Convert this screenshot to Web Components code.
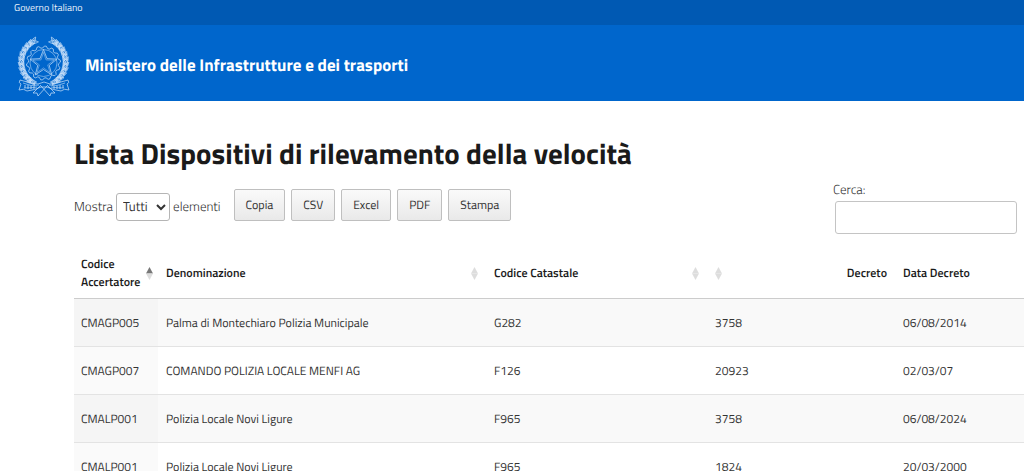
<!DOCTYPE html>
<html lang="it">
<head>
<meta charset="utf-8">
<meta name="viewport" content="width=device-width, initial-scale=1">
<title>Lista Dispositivi di rilevamento della velocità</title>
<style>
  body {
    margin: 0;
    background: #fff;
    color: #333;
    font-family: "Titillium Web", Lato, sans-serif;
    font-size: 12px;
    text-rendering: geometricPrecision;
  }

  main {
    padding: 33px 0 0 74px;
  }

  h1 {
    margin: 0 0 7px;
    font-size: 29px;
    line-height: 40px;
    font-weight: 700;
    color: #1a1a1a;
  }
</style>
</head>
<body>
  <slim-header>Governo Italiano</slim-header>
  <brand-header>Ministero delle Infrastrutture e dei trasporti</brand-header>
  <main>
    <h1>Lista Dispositivi di rilevamento della velocità</h1>
    <table-toolbar>
      <tool-button>Copia</tool-button>
      <tool-button>CSV</tool-button>
      <tool-button>Excel</tool-button>
      <tool-button>PDF</tool-button>
      <tool-button>Stampa</tool-button>
    </table-toolbar>
    <device-table></device-table>
  </main>

<script>
// attach an open shadow root filled from the given markup
function render(host, html) {
  const template = document.createElement("template");
  template.innerHTML = html;
  host.attachShadow({ mode: "open" }).appendChild(template.content.cloneNode(true));
}

class SlimHeader extends HTMLElement {
  constructor() {
    super();
    render(this, `
      <style>
        :host { display: block; background: #0059b3; padding: 0 14px 9px; }
        a { display: block; font-size: 10px; line-height: 16px; color: #e6f0fa; text-decoration: none; }
      </style>
      <a href="#"><slot></slot></a>
    `);
  }
}
customElements.define("slim-header", SlimHeader);

// Italian Republic emblem: star over a cogwheel, two branches and a ribbon
class StateEmblem extends HTMLElement {
  constructor() {
    super();
    render(this, `
      <style>
        :host { display: block; width: 54px; height: 60px; }
        svg { display: block; width: 100%; height: 100%; }
      </style>
      <svg viewBox="0 0 54 60" fill="none" stroke="#cfe4fa" stroke-width="0.7" stroke-linejoin="round" aria-hidden="true">
        <path d="${this.cog(26.5, 27, 15, 17, 14)}"/>
        <circle cx="26.5" cy="27" r="13.5" stroke-width="0.5"/>
        <path d="${this.star(26.5, 27.5, 14, 6)}"/>
        <path d="${this.star(26.5, 27.5, 11, 4.4)}" stroke-width="0.4"/>
        <g stroke-width="0.6">${this.branch(-1)}${this.branch(1)}</g>
        <path d="M3 44Q1 47 4 48L2 54Q7 52 10 55Q18 54 24 51L30 51Q36 54 44 55Q47 52 52 54L50 48Q53 47 51 44Q42 47 33 48L27 46L21 48Q12 47 3 44Z"/>
        <path d="M6 47Q14 51 22 49M32 49Q40 51 48 47M7 52Q14 52 20 51M34 51Q40 52 47 52" stroke-width="0.6"/>
        <path d="M8 49v3M11 49v4M14 50v3M17 50v3M37 50v3M40 50v3M43 49v4M46 49v3" stroke-width="0.8"/>
        <path d="M24 49L16 57L20 57L21 60L30 50M30 49L38 57L34 57L33 60L24 50"/>
      </svg>
    `);
  }

  star(cx, cy, outer, inner) {
    let d = "";
    for (let i = 0; i < 10; i++) {
      const r = i % 2 ? inner : outer;
      const a = Math.PI * (i / 5 - 0.5);
      d += (i ? "L" : "M") + (cx + r * Math.cos(a)).toFixed(2) + " " + (cy + r * Math.sin(a)).toFixed(2);
    }
    return d + "Z";
  }

  cog(cx, cy, inner, outer, teeth) {
    let d = "";
    for (let i = 0; i < teeth * 4; i++) {
      const r = i % 4 < 2 ? inner : outer;
      const a = (Math.PI * 2 * (i + 0.5)) / (teeth * 4);
      d += (i ? "L" : "M") + (cx + r * Math.cos(a)).toFixed(2) + " " + (cy + r * Math.sin(a)).toFixed(2);
    }
    return d + "Z";
  }

  // pairs of long leaves along one side of an oval, pointing towards the top
  branch(side) {
    const leaf = "M0 4Q-3.5 0 0 -6Q3.5 0 0 4ZM0 4V-4";
    let out = "";
    for (let deg = 30; deg <= 154; deg += 12) {
      const a = (deg * Math.PI) / 180;
      const x = 26.5 + side * 22 * Math.sin(a);
      const y = 26 + 23 * Math.cos(a);
      [-28, 28].forEach(tilt => {
        const turn = side * (90 - deg) + tilt;
        out += `<path d="${leaf}" transform="translate(${x.toFixed(1)} ${y.toFixed(1)}) rotate(${turn})"/>`;
      });
    }
    return out;
  }
}
customElements.define("state-emblem", StateEmblem);

class BrandHeader extends HTMLElement {
  constructor() {
    super();
    render(this, `
      <style>
        :host { display: block; background: #0066cc; padding: 11px 17px 5px; }
        a { display: flex; align-items: center; gap: 14px; color: #fff; text-decoration: none; }
        span { font-size: 17px; line-height: 26px; padding-bottom: 2px; font-weight: 700; }
      </style>
      <a href="#"><state-emblem></state-emblem><span><slot></slot></span></a>
    `);
  }
}
customElements.define("brand-header", BrandHeader);

class ToolButton extends HTMLElement {
  constructor() {
    super();
    render(this, `
      <style>
        :host { display: block; }
        button {
          display: block;
          height: 32px;
          padding: 0 11px 2px;
          border: 1px solid #bfbfbf;
          border-radius: 2px;
          background: linear-gradient(#fafafa, #e9e9e9);
          color: #333;
          font: inherit;
          font-size: 12px;
          text-rendering: inherit;
          cursor: pointer;
        }
      </style>
      <button type="button"><slot></slot></button>
    `);
  }
}
customElements.define("tool-button", ToolButton);

class TableToolbar extends HTMLElement {
  constructor() {
    super();
    render(this, `
      <style>
        :host {
          display: flex;
          align-items: flex-start;
          justify-content: space-between;
          padding-right: 7px;
          margin-bottom: 16px;
          font-size: 13px;
          font-weight: 300;
        }
        .controls { display: flex; gap: 13px; padding-top: 8px; }
        .length { display: flex; align-items: center; gap: 3px; padding-top: 3px; }
        .buttons { display: flex; gap: 6px; font-weight: 400; }
        select {
          width: 54px;
          height: 28px;
          padding-left: 2px;
          border: 1px solid #b5b5b5;
          border-radius: 3px;
          background: #fff;
          color: #333;
          font: inherit;
          font-weight: 400;
          text-rendering: inherit;
        }
        .search { display: flex; flex-direction: column; gap: 1px; line-height: 19px; }
        input {
          box-sizing: border-box;
          width: 182px;
          height: 33px;
          margin: 0 0 0 2px;
          padding: 4px;
          border: 1px solid #c4c4c4;
          border-radius: 3px;
          font: inherit;
        }
      </style>
      <div class="controls">
        <label class="length">Mostra
          <select><option>Tutti</option><option>10</option><option>25</option><option>50</option></select>
          elementi
        </label>
        <div class="buttons"><slot></slot></div>
      </div>
      <div class="search">
        <label for="search">Cerca:</label>
        <input type="search" id="search">
      </div>
    `);
  }
}
customElements.define("table-toolbar", TableToolbar);

class SortIcon extends HTMLElement {
  constructor() {
    super();
    const up = this.getAttribute("order") === "asc" ? "#777" : "#ddd";
    render(this, `
      <style>
        :host { display: block; flex: none; width: 7px; height: 13px; }
        svg { display: block; }
      </style>
      <svg width="7" height="13" viewBox="0 0 7 13" aria-hidden="true">
        <path d="M3.5 0L7 6.5H0Z" fill="${up}"/>
        <path d="M0 6.5H7L3.5 13Z" fill="#ddd"/>
      </svg>
    `);
  }
}
customElements.define("sort-icon", SortIcon);

const devices = [
  ["CMAGP005", "Palma di Montechiaro Polizia Municipale", "G282", "3758", "06/08/2014"],
  ["CMAGP007", "COMANDO POLIZIA LOCALE MENFI AG", "F126", "20923", "02/03/07"],
  ["CMALP001", "Polizia Locale Novi Ligure", "F965", "3758", "06/08/2024"],
  ["CMALP001", "Polizia Locale Novi Ligure", "F965", "1824", "20/03/2000"]
];

class DeviceTable extends HTMLElement {
  constructor() {
    super();
    const rows = devices
      .map(row => `<tr>${row.map(cell => `<td>${cell}</td>`).join("")}</tr>`)
      .join("");
    render(this, `
      <style>
        :host { display: block; }
        table { width: 100%; table-layout: fixed; border-collapse: separate; border-spacing: 0; }
        .code { width: 84px; }
        .name { width: 328px; }
        .cadastral { width: 221px; }
        .decree { width: 188px; }
        .date { width: 129px; }
        th, td { padding: 0 8px; text-align: left; line-height: 18px; }
        th:first-child, td:first-child { padding-left: 7px; }
        th { height: 46px; padding-bottom: 2px; border-bottom: 1px solid #ccc; font-weight: 600; color: #1a1a1a; }
        th:first-child { padding-right: 5px; }
        th div { display: flex; align-items: center; justify-content: space-between; }
        td { height: 47px; border-bottom: 1px solid #e3e3e3; }
        tbody tr:nth-child(odd) { background: #f9f9f9; }
        tbody tr:nth-child(odd) td:first-child { background: #f5f5f5; }
        tbody tr:nth-child(even) td:first-child { background: #fafafa; }
      </style>
      <table>
        <colgroup>
          <col class="code"><col class="name"><col class="cadastral"><col class="decree"><col class="date">
        </colgroup>
        <thead>
          <tr>
            <th><div>Codice Accertatore<sort-icon order="asc"></sort-icon></div></th>
            <th><div>Denominazione<sort-icon></sort-icon></div></th>
            <th><div>Codice Catastale<sort-icon></sort-icon></div></th>
            <th><div><sort-icon></sort-icon>Decreto</div></th>
            <th>Data Decreto</th>
          </tr>
        </thead>
        <tbody>${rows}</tbody>
      </table>
    `);
  }
}
customElements.define("device-table", DeviceTable);
</script>
</body>
</html>
